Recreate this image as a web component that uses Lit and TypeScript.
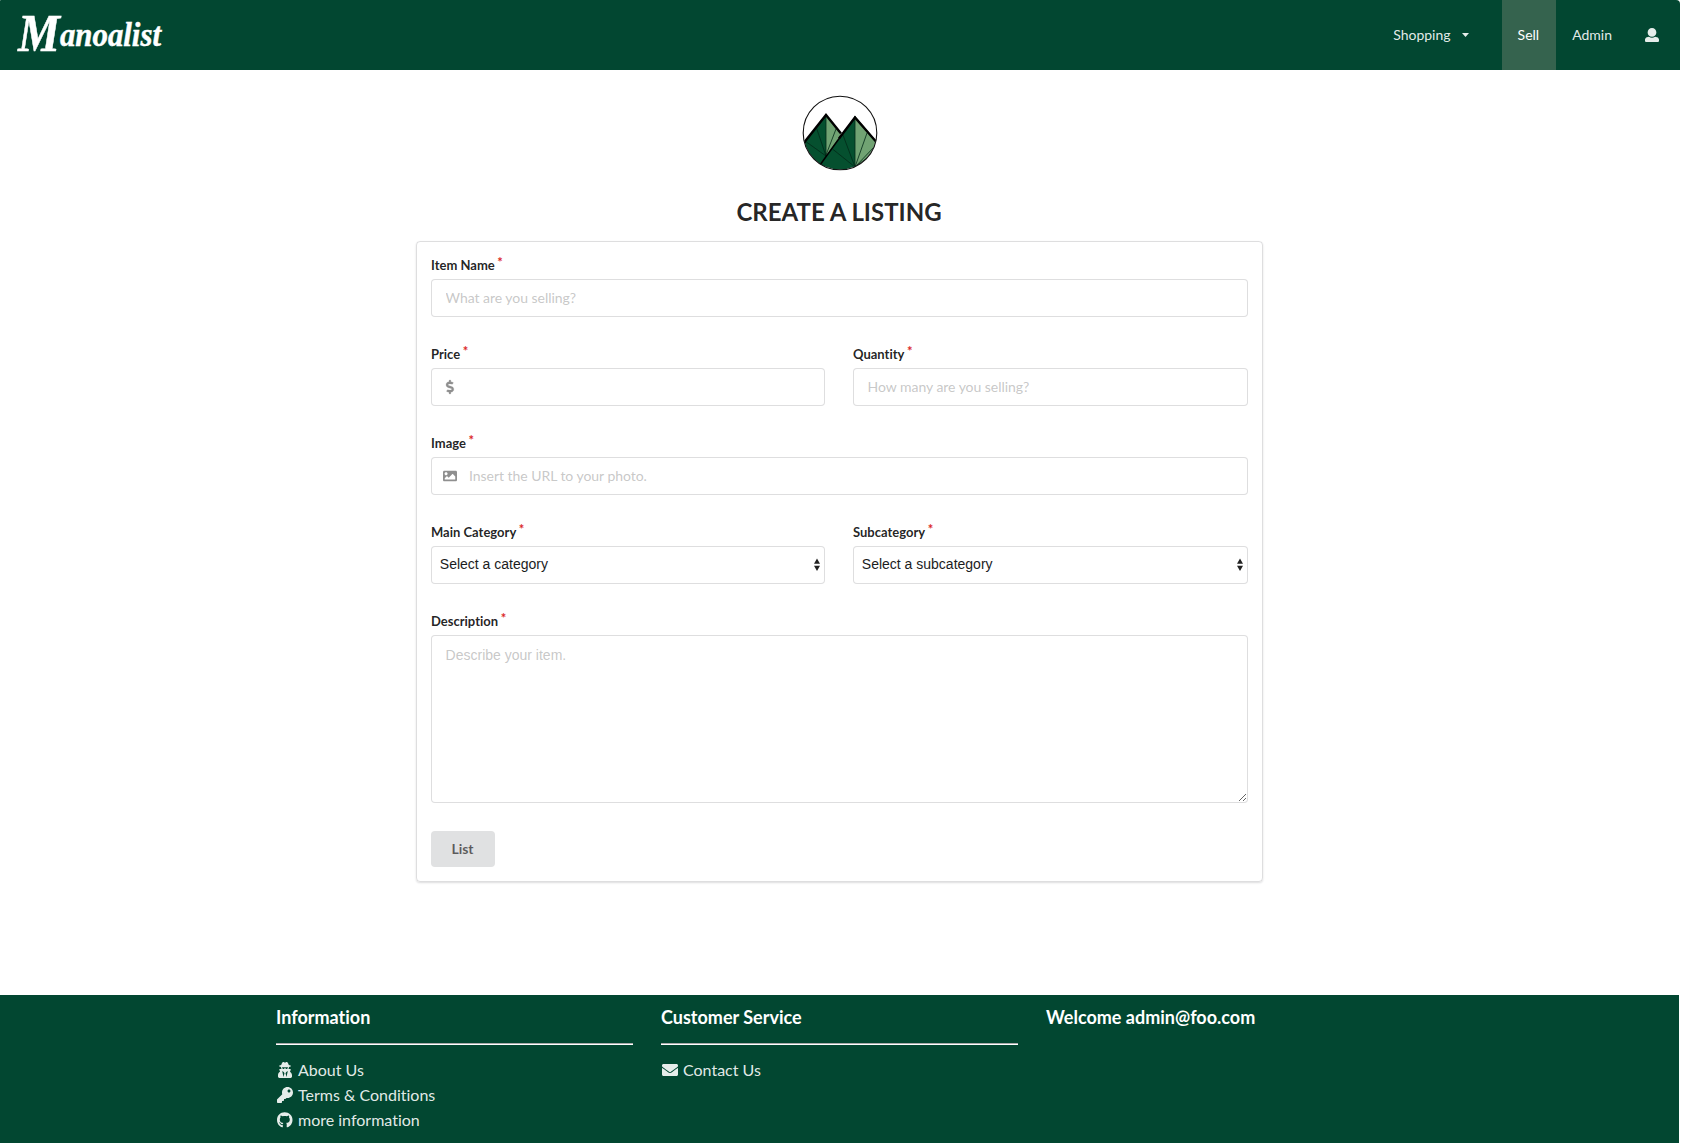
import { LitElement, html, css, svg, nothing } from "lit";
import { customElement, property } from "lit/decorators.js";

const ICONS: Record<string, { box: string; d: string }> = {
  user: {
    box: "0 0 512 512",
    d: "M256 0c88.366 0 160 71.634 160 160s-71.634 160-160 160S96 248.366 96 160 167.634 0 256 0zm183.283 333.821l-71.313-17.828c-74.923 53.89-165.738 41.864-223.94 0l-71.313 17.828C29.981 344.505 0 382.903 0 426.955V464c0 26.51 21.49 48 48 48h416c26.51 0 48-21.49 48-48v-37.045c0-44.052-29.981-82.45-72.717-93.134z",
  },
  image: {
    box: "0 0 512 512",
    d: "M464 448H48c-26.51 0-48-21.49-48-48V112c0-26.51 21.49-48 48-48h416c26.51 0 48 21.49 48 48v288c0 26.51-21.49 48-48 48zM112 120c-30.928 0-56 25.072-56 56s25.072 56 56 56 56-25.072 56-56-25.072-56-56-56zM64 384h384V272l-87.515-87.515c-4.686-4.686-12.284-4.686-16.971 0L208 320l-55.515-55.515c-4.686-4.686-12.284-4.686-16.971 0L64 336v48z",
  },
  envelope: {
    box: "0 0 512 512",
    d: "M502.3 190.8c3.9-3.1 9.7-.2 9.7 4.7V400c0 26.5-21.5 48-48 48H48c-26.5 0-48-21.5-48-48V195.6c0-5 5.7-7.8 9.7-4.7 22.4 17.4 52.1 39.5 154.1 113.6 21.1 15.4 56.7 47.8 92.2 47.6 35.7.3 72-32.8 92.3-47.6 102-74.1 131.6-96.3 154-113.7zM256 320c23.2.4 56.6-29.2 73.4-41.4 132.7-96.3 142.8-104.7 173.4-128.7 5.8-4.5 9.2-11.5 9.2-18.9v-19c0-26.5-21.5-48-48-48H48c-26.5 0-48 21.5-48 48v19c0 7.4 3.4 14.3 9.2 18.9 30.6 23.9 40.7 32.4 173.4 128.7 16.8 12.2 50.2 41.8 73.4 41.4z",
  },
  key: {
    box: "0 0 512 512",
    d: "M512 176.001C512 273.203 433.202 352 336 352c-11.22 0-22.19-1.062-32.827-3.069l-24.012 27.014A23.999 23.999 0 0 1 261.223 384H224v40c0 13.255-10.745 24-24 24h-40v40c0 13.255-10.745 24-24 24H24c-13.255 0-24-10.745-24-24v-78.059c0-6.365 2.529-12.47 7.029-16.971l161.802-161.802C163.108 213.814 160 195.271 160 176 160 78.798 238.797.001 335.999 0 433.488-.001 512 78.511 512 176.001zM336 128c0 26.51 21.49 48 48 48s48-21.49 48-48-21.49-48-48-48-48 21.49-48 48z",
  },
  github: {
    box: "0 0 496 512",
    d: "M244.8 8C106.1 8 0 113.3 0 252c0 110.9 69.8 205.8 169.5 239.2 12.8 2.3 17.3-5.6 17.3-12.1 0-6.2-.3-40.4-.3-61.4 0 0-70 15-84.7-29.8 0 0-11.4-29.1-27.8-36.6 0 0-22.9-15.7 1.6-15.4 0 0 24.9 2 38.6 25.8 21.9 38.6 58.6 27.5 72.9 20.9 2.3-16 8.8-27.1 16-33.7-55.9-6.2-112.3-14.3-112.3-110.5 0-27.5 7.6-41.3 23.6-58.9-2.6-6.5-11.1-33.3 2.6-67.9 20.9-6.5 69 27 69 27 20-5.6 41.5-8.5 62.8-8.5s42.8 2.9 62.8 8.5c0 0 48.1-33.6 69-27 13.7 34.7 5.2 61.4 2.6 67.9 16 17.7 25.8 31.5 25.8 58.9 0 96.5-58.9 104.2-114.8 110.5 9.2 7.9 17 22.9 17 46.4 0 33.7-.3 75.4-.3 83.6 0 6.5 4.6 14.4 17.3 12.1C428.2 457.8 496 362.9 496 252 496 113.3 383.5 8 244.8 8z",
  },
  secret: {
    box: "0 0 448 512",
    d: "M383.9 308.3l23.9-62.6c4-10.5-3.7-21.7-15-21.7h-58.5c11-18.9 17.8-40.6 17.8-64v-.3c39.2-7.8 64-19.1 64-31.7 0-13.3-27.3-25.1-70.1-33-9.2-32.8-27-65.8-40.6-82.8-9.5-11.9-25.9-15.6-39.5-8.8l-27.6 13.8c-9 4.5-19.6 4.5-28.6 0L182.1 3.4c-13.6-6.8-30-3.1-39.5 8.8-13.5 17-31.4 50-40.6 82.8-42.7 7.9-70 19.7-70 33 0 12.6 24.8 23.9 64 31.7v.3c0 23.4 6.8 45.1 17.8 64H56.3c-11.5 0-19.2 11.7-14.7 22.3l25.8 60.2C27.3 329.8 0 372.7 0 422.4v44.8C0 491.9 20.1 512 44.8 512h358.4c24.7 0 44.8-20.1 44.8-44.8v-44.8c0-48.4-25.8-90.4-64.1-114.1zM176 480l-41.6-192 49.6 32 24 40-32 120zm96 0l-32-120 24-40 49.6-32L272 480zm41.7-298.5c-3.9 11.9-7 24.6-16.5 33.4-10.1 9.3-48 22.4-64-25-2.8-8.4-15.4-8.4-18.3 0-17 50.2-56 32.4-64 25-9.5-8.8-12.7-21.5-16.5-33.4-.8-2.5-6.3-5.7-6.3-5.8v-10.8c28.3 3.6 61 5.8 96 5.8s67.7-2.1 96-5.8v10.8c-.1.1-5.6 3.2-6.4 5.8z",
  },
  dollar: {
    box: "0 0 288 512",
    d: "M209.2 233.4l-108-31.6C88.7 198.2 80 186.5 80 173.5c0-16.3 13.2-29.5 29.5-29.5h66.3c12.2 0 24.2 3.7 34.2 10.5 6.1 4.1 14.3 3.1 19.5-2l34.8-34c7.1-6.9 6.1-18.4-1.8-24.5C238 74.8 207.4 64.1 176 64V16c0-8.8-7.2-16-16-16h-32c-8.8 0-16 7.2-16 16v48h-2.5C45.8 64-5.4 118.7.5 183.6c4.2 46.1 39.4 83.6 83.8 96.6l102.5 30c12.5 3.7 21.2 15.3 21.2 28.3 0 16.3-13.2 29.5-29.5 29.5h-66.3C100 368 88 364.3 78 357.5c-6.1-4.1-14.3-3.1-19.5 2l-34.8 34c-7.1 6.9-6.1 18.4 1.8 24.5 24.5 19.2 55.1 29.9 86.5 30v48c0 8.8 7.2 16 16 16h32c8.8 0 16-7.2 16-16v-48.2c46.6-.9 90.3-28.6 105.7-72.7 21.5-61.6-14.6-124.8-72.5-141.7z",
  },
};

@customElement("ui-icon")
export class UiIcon extends LitElement {
  static styles = css`
    :host { display: inline-flex; align-items: center; justify-content: center; }
    .glyph { display: block; height: 100%; fill: currentColor; }
    .dollar { stroke: currentColor; stroke-width: 8; overflow: visible; }
  `;
  @property() name = "user";
  render() {
    const icon = ICONS[this.name];
    return html`<svg class="glyph ${this.name}" viewBox=${icon.box} aria-hidden="true">${svg`<path d=${icon.d}></path>`}</svg>`;
  }
}

@customElement("nav-bar")
export class NavBar extends LitElement {
  static styles = css`
    :host { display: block; }
    .bar {
      display: flex; align-items: stretch; justify-content: space-between;
      height: 70px; padding-right: 4px; background: #024731; color: rgba(255, 255, 255, 0.9);
      border-radius: 1px 4px 0 0; font-size: 14px; line-height: 14px;
    }
    .brand { display: block; width: 180px; height: 70px; fill: #fff; }
    .script {
      font-family: "Liberation Serif", serif; font-size: 34px; font-style: italic; font-weight: 700;
      stroke: #fff; stroke-width: 0.5;
    }
    .initial { font-size: 52px; }
    .items { display: flex; }
    .item { display: flex; align-items: center; padding: 0 16px; }
    .drop { padding-right: 33px; gap: 11px; }
    .caret { width: 7px; height: 4px; fill: currentColor; }
    .active { padding-right: 17px; background: #35634e; color: #fff; }
    .person { width: 16px; height: 14px; }
  `;
  render() {
    return html`
      <nav class="bar">
        <svg class="brand" viewBox="0 0 180 70">
          <text class="script" x="18" y="51" textLength="143" lengthAdjust="spacingAndGlyphs"><tspan class="initial">M</tspan><tspan dy="-5">anoalist</tspan></text>
        </svg>
        <div class="items">
          <div class="item drop">
            Shopping
            <svg class="caret" viewBox="0 0 7 4"><path d="M0 0h7L3.5 4z"></path></svg>
          </div>
          <div class="item active">Sell</div>
          <div class="item">Admin</div>
          <div class="item"><ui-icon class="person" name="user"></ui-icon></div>
        </div>
      </nav>
    `;
  }
}

@customElement("mountain-logo")
export class MountainLogo extends LitElement {
  static styles = css`
    :host { display: block; width: 76px; height: 76px; }
    .dark { fill: #05502f; }
    .light { fill: #71a373; }
    .ridge { fill: none; stroke: #000; stroke-width: 2.4; }
    .base { fill: none; stroke: #000; stroke-width: 1.5; }
    .facet { fill: none; stroke: #022a18; stroke-width: 0.8; }
    .ring { fill: none; stroke: #111; stroke-width: 1.1; }
  `;
  render() {
    return html`
      <svg width="76" height="76" viewBox="0 0 76 76">
        <defs><clipPath id="disc"><circle cx="38" cy="38" r="36.6"></circle></clipPath></defs>
        <g clip-path="url(#disc)">
          <path class="dark" d="M24 19L0 50v26h20l18-36z"></path>
          <path class="light" d="M24 19v42l15-21z"></path>
          <path class="facet" d="M24 19v42M24 61L14.500 33M24 61L3 46M24 60L34 34"></path>
          <path class="ridge" d="M1 49L24 20l15 18.500"></path>
          <path class="dark" d="M53 21L18 70v6h35z"></path>
          <path class="light" d="M53 21v51l30-16z"></path>
          <path class="facet" d="M53 21v51M53 72L41 40M53 72L30.500 54M53 72L65 38M53 72l21-22M53 72l21-16"></path>
          <path class="base" d="M18 70L40 39.500"></path>
          <path class="ridge" d="M37 43.500L53 22.500 77 50"></path>
        </g>
        <circle class="ring" cx="38" cy="38" r="36.800"></circle>
      </svg>
    `;
  }
}

@customElement("form-field")
export class FormField extends LitElement {
  static styles = css`
    :host { display: block; min-width: 0; }
    .label {
      display: block; height: 19px; margin-bottom: 4px; color: rgba(0, 0, 0, 0.87);
      font-size: 13px; font-weight: 700; line-height: 19px;
    }
    .star { display: inline-block; margin: -3px 0 0 2.6px; color: #db2828; vertical-align: top; }
    .box { position: relative; display: flex; }
    .control {
      box-sizing: border-box; width: 100%; height: 38px; margin: 0; padding: 0 14px 2px 13.6px;
      border: 1px solid rgba(34, 36, 38, 0.15); border-radius: 4px; outline: none;
      background: #fff; color: rgba(0, 0, 0, 0.87); font: 14px/17px Lato, sans-serif;
      font-variant-ligatures: none; letter-spacing: -0.04px;
    }
    .control::placeholder { color: rgba(191, 191, 191, 0.87); opacity: 1; }
    .iconic { padding-left: 37px; }
    .lead { position: absolute; top: 12px; left: 9.5px; width: 19px; height: 14px; color: #8f8f8f; }
    .select {
      appearance: none; padding: 0 8px 2px 7.8px; color: #1b1c1d;
      font: 14px "Liberation Sans", sans-serif; letter-spacing: 0;
    }
    .arrows { position: absolute; top: 12px; right: 5px; width: 6px; height: 14px; fill: #222; }
    .area {
      height: 168px; padding: 10px 14px 11px 13.6px; resize: vertical;
      font: 14px/18px "Liberation Sans", sans-serif; letter-spacing: 0;
    }
  `;
  @property() label = "";
  @property() kind = "input";
  @property() hint = "";
  @property() icon = "";

  private control() {
    if (this.kind === "select") {
      return html`
        <select class="control select"><option>${this.hint}</option></select>
        <svg class="arrows" viewBox="0 0 6 14"><path d="M3 .5l3 5.300H0zM3 13L0 7.700h6z"></path></svg>
      `;
    }
    if (this.kind === "area") {
      return html`<textarea class="control area" placeholder=${this.hint}></textarea>`;
    }
    return html`
      <input class="control ${this.icon ? "iconic" : ""}" placeholder=${this.hint} />
      ${this.icon ? html`<ui-icon class="lead" name=${this.icon}></ui-icon>` : nothing}
    `;
  }
  render() {
    return html`
      <label class="label">${this.label}<span class="star">*</span></label>
      <div class="box">${this.control()}</div>
    `;
  }
}

@customElement("page-footer")
export class PageFooter extends LitElement {
  static styles = css`
    :host { display: block; flex: 1; margin-right: 2px; background: #024731; }
    .columns { display: grid; grid-template-columns: repeat(3, 357px); gap: 28px; padding: 10px 0 0 276px; }
    .title { margin: 0; color: #fff; font-size: 18px; font-weight: 700; line-height: 24px; }
    .rule { height: 1px; margin: 14px 0 12px; border-top: 1px solid #a9a9a9; background: #fff; }
    .link { display: flex; align-items: center; height: 25px; color: rgba(255, 255, 255, 0.9); font-size: 16px; }
    .mark { width: 18px; height: 16px; margin-right: 4px; }
  `;
  render() {
    const link = (icon: string, text: string) =>
      html`<div class="link"><ui-icon class="mark" name=${icon}></ui-icon>${text}</div>`;
    return html`
      <footer class="columns">
        <section>
          <h4 class="title">Information</h4>
          <div class="rule"></div>
          ${link("secret", "About Us")} ${link("key", "Terms & Conditions")} ${link("github", "more information")}
        </section>
        <section>
          <h4 class="title">Customer Service</h4>
          <div class="rule"></div>
          ${link("envelope", "Contact Us")}
        </section>
        <section><h4 class="title">Welcome admin@foo.com</h4></section>
      </footer>
    `;
  }
}

@customElement("app-root")
export class AppRoot extends LitElement {
  static styles = css`
    :host {
      display: flex; flex-direction: column; height: 1143px; overflow: hidden;
      background: #fff; font-family: Lato, sans-serif; font-variant-ligatures: none;
    }
    .nav { margin-right: 1px; }
    .main {
      display: flex; flex-direction: column; align-items: center;
      box-sizing: border-box; height: 925px; padding: 25px 2px 0 0;
    }
    .heading { margin: 26px 1px 15px 0; color: rgba(0, 0, 0, 0.87); font-size: 24px; font-weight: 700; line-height: 29px; }
    .card {
      display: flex; flex-direction: column; gap: 28px; box-sizing: border-box; width: 847px; padding: 14px;
      border: 1px solid rgba(34, 36, 38, 0.15); border-radius: 4px; box-shadow: 0 1px 2px rgba(34, 36, 38, 0.15);
    }
    .row { display: grid; grid-template-columns: 394fr 395fr; gap: 28px; }
    .submit {
      align-self: flex-start; width: 64px; height: 36px; padding: 0 1px 0 0; border: 0; border-radius: 4px;
      background: #e0e1e2; color: rgba(0, 0, 0, 0.6); font: 700 14px/14px Lato, sans-serif;
    }
  `;
  render() {
    return html`
      <nav-bar class="nav"></nav-bar>
      <main class="main">
        <mountain-logo></mountain-logo>
        <h2 class="heading">CREATE A LISTING</h2>
        <div class="card">
          <form-field label="Item Name" hint="What are you selling?"></form-field>
          <div class="row">
            <form-field label="Price" icon="dollar"></form-field>
            <form-field label="Quantity" hint="How many are you selling?"></form-field>
          </div>
          <form-field label="Image" icon="image" hint="Insert the URL to your photo."></form-field>
          <div class="row">
            <form-field label="Main Category" kind="select" hint="Select a category"></form-field>
            <form-field label="Subcategory" kind="select" hint="Select a subcategory"></form-field>
          </div>
          <form-field label="Description" kind="area" hint="Describe your item."></form-field>
          <button class="submit">List</button>
        </div>
      </main>
      <page-footer></page-footer>
    `;
  }
}
